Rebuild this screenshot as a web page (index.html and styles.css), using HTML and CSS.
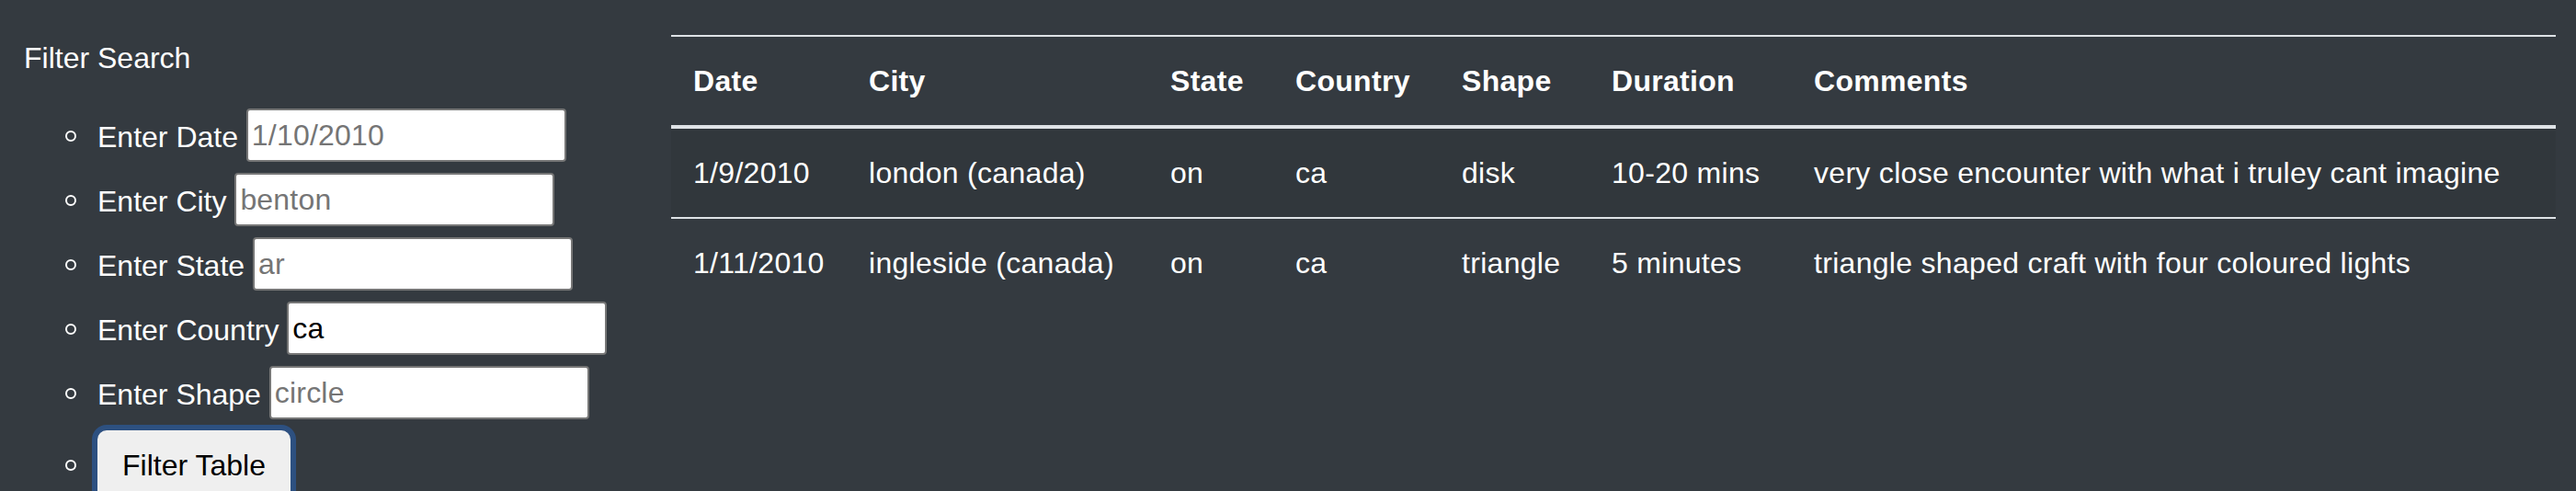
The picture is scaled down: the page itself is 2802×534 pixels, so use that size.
FILE: index.html
```html
<!DOCTYPE html>
<html lang="en">
<head>
<meta charset="utf-8">
<title>UFO Sightings</title>
<link rel="stylesheet" href="styles.css">
</head>
<body>
<div class="page">
  <aside class="sidebar">
    <div class="filter-title">Filter Search</div>
    <ul class="filters">
      <li><label class="filter-label" for="datetime">Enter Date</label> <input class="filter-input" id="datetime" type="text" placeholder="1/10/2010"></li>
      <li><label class="filter-label" for="city">Enter City</label> <input class="filter-input" id="city" type="text" placeholder="benton"></li>
      <li><label class="filter-label" for="state">Enter State</label> <input class="filter-input" id="state" type="text" placeholder="ar"></li>
      <li><label class="filter-label" for="country">Enter Country</label> <input class="filter-input" id="country" type="text" value="ca"></li>
      <li><label class="filter-label" for="shape">Enter Shape</label> <input class="filter-input" id="shape" type="text" placeholder="circle"></li>
      <li class="filter-action"><button class="filter-btn" type="button">Filter Table</button></li>
    </ul>
  </aside>
  <main class="content">
    <table class="ufo-table">
      <colgroup>
        <col class="c-date"><col class="c-city"><col class="c-state"><col class="c-country"><col class="c-shape"><col class="c-duration"><col class="c-comments">
      </colgroup>
      <thead>
        <tr><th>Date</th><th>City</th><th>State</th><th>Country</th><th>Shape</th><th>Duration</th><th>Comments</th></tr>
      </thead>
      <tbody>
        <tr class="striped"><td>1/9/2010</td><td>london (canada)</td><td>on</td><td>ca</td><td>disk</td><td>10-20 mins</td><td>very close encounter with what i truley cant imagine</td></tr>
        <tr><td>1/11/2010</td><td>ingleside (canada)</td><td>on</td><td>ca</td><td>triangle</td><td>5 minutes</td><td>triangle shaped craft with four coloured lights</td></tr>
      </tbody>
    </table>
  </main>
</div>
</body>
</html>
```

FILE: styles.css
```css
html, body {
  margin: 0;
  padding: 0;
}

body {
  background: #343a40;
  color: #ffffff;
  font-family: "Liberation Sans", Arial, Helvetica, sans-serif;
  font-size: 32px;
  line-height: 48px;
  letter-spacing: 0.3px;
  overflow: hidden;
}

.page {
  display: flex;
  align-items: flex-start;
  padding-left: 26px;
  padding-right: 22px;
}

.sidebar {
  width: 704px;
  flex: none;
  padding-top: 39px;
  letter-spacing: 0;
}

.filter-title {
  line-height: 48px;
  margin: 0 0 27px 0;
}

.filters {
  list-style: none;
  margin: 0;
  padding-left: 80px;
}

.filters li {
  position: relative;
  line-height: 70px;
  height: 70px;
}

.filters li::before {
  content: "";
  position: absolute;
  left: -35px;
  top: 28px;
  width: 8px;
  height: 8px;
  border: 2px solid #ffffff;
  border-radius: 50%;
}

.filter-input {
  box-sizing: border-box;
  width: 348px;
  height: 58px;
  padding: 2px 4px;
  border: 2px solid #767676;
  border-radius: 4px;
  background: #ffffff;
  color: #000000;
  font-family: "Liberation Sans", Arial, Helvetica, sans-serif;
  font-size: 32px;
  letter-spacing: 0.2px;
  line-height: normal;
  vertical-align: top;
  margin: 4px 0 0 0;
}

.filter-input::placeholder {
  color: #757575;
  opacity: 1;
}

.filters li.filter-action {
  height: auto;
  padding-top: 4px;
}

.filters li.filter-action::before {
  top: 36px;
}

.filter-btn {
  box-sizing: border-box;
  font-family: "Liberation Sans", Arial, Helvetica, sans-serif;
  font-size: 32px;
  letter-spacing: 0;
  line-height: 48px;
  padding: 12px 25px;
  border: 2px solid #efefef;
  border-radius: 10px;
  background: #efefef;
  color: #000000;
  margin: 0;
  box-shadow: 0 0 0 6px #2d5080;
}

.content {
  flex: 1;
  padding-top: 38px;
}

.ufo-table {
  width: 2050px;
  table-layout: fixed;
  border-collapse: separate;
  border-spacing: 0;
  color: #ffffff;
}

.c-date { width: 191px; }
.c-city { width: 328px; }
.c-state { width: 136px; }
.c-country { width: 181px; }
.c-shape { width: 163px; }
.c-duration { width: 220px; }

.ufo-table th,
.ufo-table td {
  padding: 24px;
  text-align: left;
  vertical-align: top;
  white-space: nowrap;
  line-height: 48px;
}

.ufo-table th {
  font-weight: bold;
  border-top: 2px solid #dee2e6;
  border-bottom: 4px solid #dee2e6;
}

.ufo-table tbody tr + tr td {
  border-top: 2px solid #dee2e6;
}

.ufo-table .striped td {
  background: rgba(0, 0, 0, 0.05);
}
```
